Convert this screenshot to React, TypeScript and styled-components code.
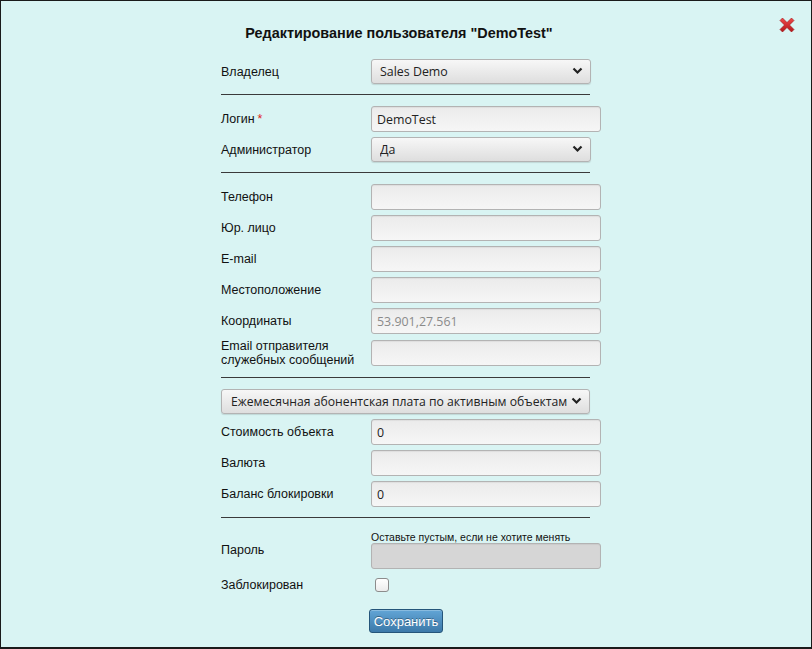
import React, { useState } from 'react';
import styled, { createGlobalStyle } from 'styled-components';

const GlobalStyle = createGlobalStyle`
  html, body {
    margin: 0;
    padding: 0;
    background: #d9f4f3;
  }
  * {
    box-sizing: border-box;
  }
`;

const Window = styled.div`
  position: relative;
  width: 812px;
  height: 649px;
  background: #d9f4f3;
  border: 1px solid #1a1a1a;
  border-bottom-width: 2px;
  font-family: "Liberation Sans", Arial, sans-serif;
  color: #111;
`;

const CloseButton = styled.button`
  position: absolute;
  top: 14px;
  right: 14px;
  width: 20px;
  height: 20px;
  padding: 0;
  border: none;
  background: none;
  cursor: pointer;
`;

const Title = styled.h1`
  margin: 0;
  padding: 24px 14px 0 0;
  font-size: 14.4px;
  line-height: 17px;
  font-weight: 700;
  text-align: center;
`;

const Form = styled.form`
  width: 390px;
  margin: 17px auto 0;
  padding-left: 10px;
  display: flex;
  flex-direction: column;
`;

const Section = styled.div`
  display: flex;
  flex-direction: column;
  gap: 5px;
`;

const Row = styled.div`
  display: grid;
  grid-template-columns: 150px 230px;
  align-items: center;
`;

const Label = styled.label`
  font-size: 12.5px;
  line-height: 14px;
`;

const Required = styled.span`
  color: #e01b1b;
  margin-left: 3px;
`;

const Separator = styled.hr`
  width: 369px;
  margin: 10px 0 11px;
  border: none;
  border-top: 1px solid #3a3a3a;
  height: 0;
`;

const Input = styled.input<{ $muted?: boolean }>`
  width: 230px;
  height: 26px;
  padding: 0 5px;
  border: 1px solid #b3b3b3;
  border-radius: 3px;
  background: linear-gradient(#ebebeb, #f6f6f6);
  box-shadow: inset 0 1px 1px rgba(0, 0, 0, 0.06);
  font-family: "Open Sans", "Noto Sans", sans-serif;
  font-size: 12.4px;
  color: ${p => (p.$muted ? '#8a8a8a' : '#222')};
  outline: none;

  &:disabled {
    background: #d6d6d6;
  }
`;

const SelectBox = styled.div<{ $wide?: boolean }>`
  position: relative;
  width: ${p => (p.$wide ? '369px' : '220px')};
  height: 25px;
  grid-column: ${p => (p.$wide ? '1 / span 2' : 'auto')};
`;

const Select = styled.select<{ $wide?: boolean }>`
  appearance: none;
  width: 100%;
  height: 100%;
  padding: ${p => (p.$wide ? '0 10px 0 9px' : '0 22px 0 8px')};
  border: 1px solid #b3b3b3;
  border-radius: 3px;
  background: linear-gradient(#f7f7f7, #dedede);
  box-shadow: 0 1px 1px rgba(0, 0, 0, 0.12);
  font-family: "Open Sans", "Noto Sans", sans-serif;
  font-size: ${p => (p.$wide ? '12.2px' : '12.4px')};
  color: #222;
  outline: none;
`;

const Chevron = styled.svg`
  position: absolute;
  right: 8px;
  top: 8px;
  width: 11px;
  height: 8px;
  pointer-events: none;
`;

const Hint = styled.div`
  font-size: 10.5px;
  line-height: 12px;
`;

const Field = styled.div`
  display: flex;
  flex-direction: column;
`;

const PasswordRow = styled(Row)`
  margin-top: 2px;
`;

const CheckRow = styled(Row)`
  margin-top: 6px;
  min-height: 20px;
`;

const Checkbox = styled.input`
  appearance: none;
  width: 14px;
  height: 14px;
  margin: 0 0 0 4px;
  border: 1px solid #8c8c8c;
  border-radius: 3px;
  background: linear-gradient(#ffffff, #ececec);
`;

const SaveButton = styled.button`
  align-self: flex-start;
  margin: 14px 0 0 148px;
  width: 74px;
  height: 24px;
  padding: 0;
  border: 1px solid #25557a;
  border-radius: 3px;
  background: linear-gradient(#62a5d6, #3c79a9);
  color: #fff;
  font-family: "Liberation Sans", Arial, sans-serif;
  font-size: 13px;
  text-shadow: 0 -1px 0 rgba(0, 0, 0, 0.35);
  box-shadow: inset 0 1px 0 rgba(255, 255, 255, 0.25);
  cursor: pointer;
`;

const ChevronIcon = () => (
  <Chevron viewBox="0 0 11 8">
    <path d="M1.5 1.5 L5.5 5.5 L9.5 1.5" fill="none" stroke="#222" strokeWidth="2.2" />
  </Chevron>
);

const CloseIcon = () => (
  <svg width="20" height="20" viewBox="0 0 20 20">
    <defs>
      <linearGradient id="xg" x1="0" y1="0" x2="0" y2="1">
        <stop offset="0" stopColor="#f0494a" />
        <stop offset="1" stopColor="#b3171a" />
      </linearGradient>
    </defs>
    <path
      d="M3 5.5 L5.5 3 L10 7.5 L14.5 3 L17 5.5 L12.5 10 L17 14.5 L14.5 17 L10 12.5 L5.5 17 L3 14.5 L7.5 10 Z"
      fill="url(#xg)"
      stroke="#9c1215"
      strokeWidth="0.6"
    />
  </svg>
);

interface DropdownProps {
  value: string;
  options: string[];
  wide?: boolean;
}

const Dropdown: React.FC<DropdownProps> = ({ value, options, wide }) => {
  const [current, setCurrent] = useState(value);
  return (
    <SelectBox $wide={wide}>
      <Select $wide={wide} value={current} onChange={e => setCurrent(e.target.value)}>
        {options.map(o => (
          <option key={o} value={o}>{o}</option>
        ))}
      </Select>
      <ChevronIcon />
    </SelectBox>
  );
};

const contactFields = ['Телефон', 'Юр. лицо', 'E-mail', 'Местоположение'];

const App: React.FC = () => {
  return (
    <>
      <GlobalStyle />
      <Window>
        <CloseButton type="button" aria-label="Закрыть">
          <CloseIcon />
        </CloseButton>
        <Title>Редактирование пользователя "DemoTest"</Title>

        <Form onSubmit={e => e.preventDefault()}>
          <Section>
            <Row>
              <Label>Владелец</Label>
              <Dropdown value="Sales Demo" options={['Sales Demo']} />
            </Row>
          </Section>

          <Separator />

          <Section>
            <Row>
              <Label>
                Логин<Required>*</Required>
              </Label>
              <Input defaultValue="DemoTest" />
            </Row>
            <Row>
              <Label>Администратор</Label>
              <Dropdown value="Да" options={['Да', 'Нет']} />
            </Row>
          </Section>

          <Separator />

          <Section>
            {contactFields.map(name => (
              <Row key={name}>
                <Label>{name}</Label>
                <Input />
              </Row>
            ))}
            <Row>
              <Label>Координаты</Label>
              <Input $muted defaultValue="53.901,27.561" />
            </Row>
            <Row>
              <Label>
                Email отправителя
                <br />
                служебных сообщений
              </Label>
              <Input />
            </Row>
          </Section>

          <Separator />

          <Section>
            <Row>
              <Dropdown
                wide
                value="Ежемесячная абонентская плата по активным объектам"
                options={['Ежемесячная абонентская плата по активным объектам']}
              />
            </Row>
            <Row>
              <Label>Стоимость объекта</Label>
              <Input defaultValue="0" />
            </Row>
            <Row>
              <Label>Валюта</Label>
              <Input />
            </Row>
            <Row>
              <Label>Баланс блокировки</Label>
              <Input defaultValue="0" />
            </Row>
          </Section>

          <Separator />

          <PasswordRow>
            <Label>Пароль</Label>
            <Field>
              <Hint>Оставьте пустым, если не хотите менять</Hint>
              <Input type="password" disabled />
            </Field>
          </PasswordRow>

          <CheckRow>
            <Label>Заблокирован</Label>
            <Checkbox type="checkbox" />
          </CheckRow>

          <SaveButton type="submit">Сохранить</SaveButton>
        </Form>
      </Window>
    </>
  );
};

export default App;
